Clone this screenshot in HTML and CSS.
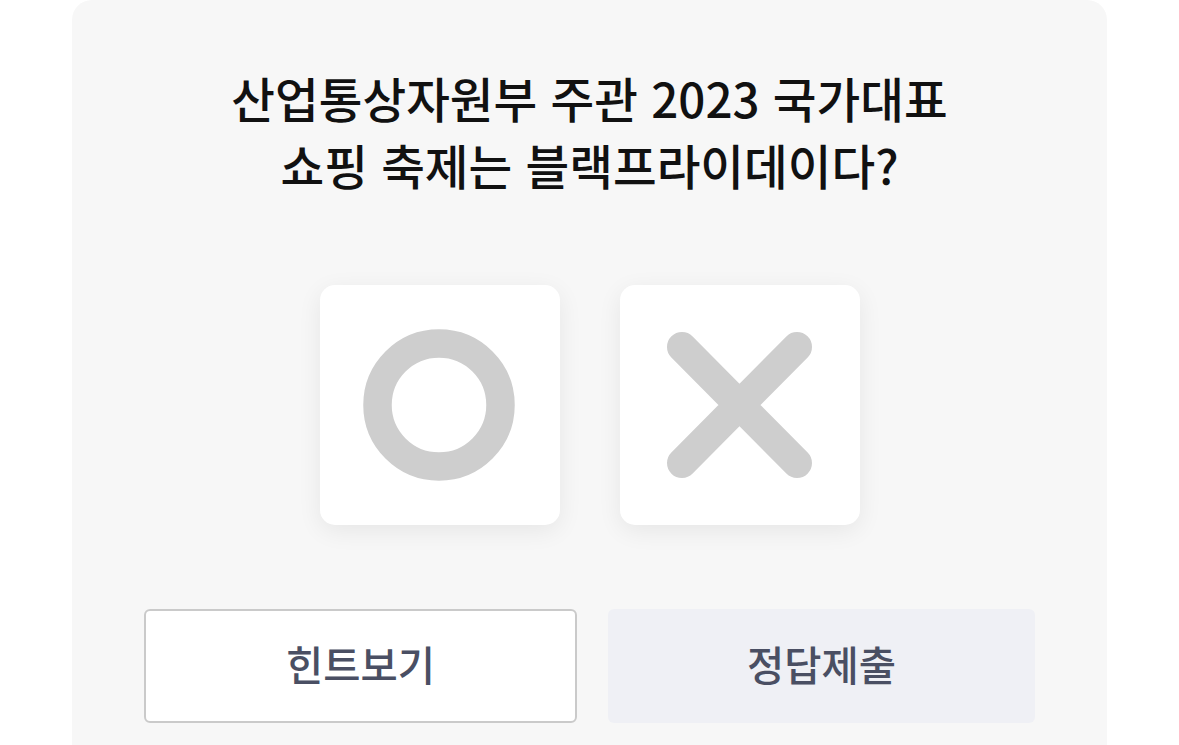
FILE: index.html
```html
<!DOCTYPE html>
<html lang="ko">
<head>
    <meta charset="UTF-8">
    <title>OX 퀴즈</title>
    <link rel="stylesheet" href="styles.css">
</head>
<body>
    <div class="quiz">
        <p class="quiz-title">산업통상자원부 주관 2023 국가대표<br>쇼핑 축제는 블랙프라이데이다?</p>
        <div class="quiz-choices">
            <a href="#" class="choice">
                <svg width="240" height="240" viewBox="0 0 240 240">
                    <circle cx="119" cy="120" r="61.5" fill="none" stroke="#cecece" stroke-width="28.5"/>
                </svg>
            </a>
            <a href="#" class="choice">
                <svg width="240" height="240" viewBox="0 0 240 240">
                    <path d="M62 62L177 178M177 62L62 178" fill="none" stroke="#cecece" stroke-width="30" stroke-linecap="round"/>
                </svg>
            </a>
        </div>
        <div class="quiz-footer">
            <a href="#" class="btn btn-hint">힌트보기</a>
            <a href="#" class="btn btn-submit">정답제출</a>
        </div>
    </div>
</body>
</html>
```

FILE: styles.css
```css
body {
    margin: 0;
    background-color: #fff;
    font-family: "Noto Sans CJK KR", "Noto Sans", sans-serif;
}

p {
    margin: 0;
}

a {
    color: inherit;
    text-decoration: none;
}

.quiz {
    width: 1035px;
    height: 800px;
    margin-left: 72px;
    padding-top: 64px;
    box-sizing: border-box;
    border-radius: 20px 20px 0 0;
    background-color: #f7f7f7;
}

.quiz-title {
    text-align: center;
    font-size: 47.5px;
    font-weight: 500;
    line-height: 67px;
    color: #111;
}

.quiz-choices {
    display: flex;
    justify-content: center;
    gap: 60px;
    margin-top: 87px;
    padding-left: 1px;
}

.choice {
    display: block;
    width: 240px;
    height: 240px;
    border-radius: 15px;
    background-color: #fff;
    box-shadow: 0 6px 24px rgba(0,0,0,0.07);
}

.choice>svg {
    display: block;
}

.quiz-footer {
    display: flex;
    gap: 31px;
    margin-top: 84px;
    padding-left: 72px;
}

.btn {
    display: flex;
    align-items: center;
    justify-content: center;
    height: 114px;
    padding-bottom: 5px;
    box-sizing: border-box;
    border-radius: 6px;
    font-size: 40.5px;
    font-weight: 500;
    color: #4a4f63;
}

.btn-hint {
    width: 433px;
    border: 2px solid #cacaca;
    background-color: #fff;
}

.btn-submit {
    width: 427px;
    background-color: #eff0f5;
}
```
